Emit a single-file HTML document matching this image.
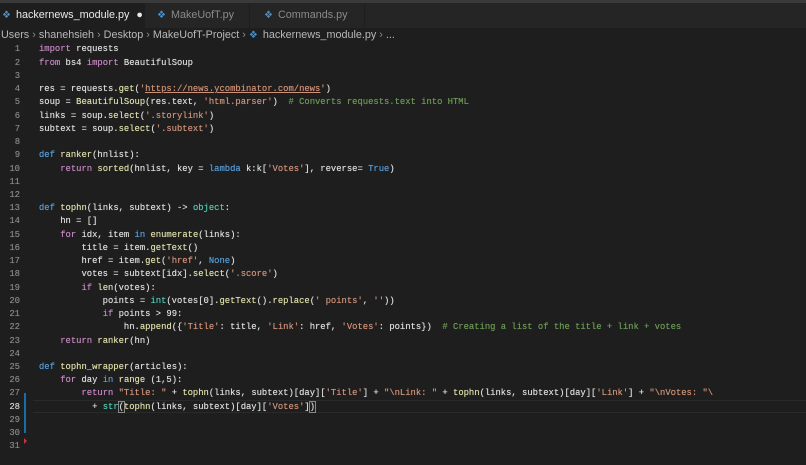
<!DOCTYPE html>
<html><head><style>
*{margin:0;padding:0;box-sizing:border-box}
body{width:806px;height:465px;background:#1e1e1e;overflow:hidden;font-family:"Liberation Sans",sans-serif;position:relative}
.top{position:absolute;left:0;top:0;width:806px;height:3px;background:#3a3a3a}
.tabs{position:absolute;left:0;top:3px;width:806px;height:25px;background:#252526}
.tab{position:absolute;top:0;height:25px;line-height:25px;font-size:10.8px;color:#8a8a8a;padding-left:12px;border-right:1px solid #1e1e1e;white-space:nowrap}
.tab.a{background:#1e1e1e;color:#eaeaea;padding-left:2px}
.py{color:#4a8fc8;font-size:10px;margin-right:5px}
.crumb{position:absolute;left:1px;top:28px;font-size:10.8px;color:#b8b8b8;line-height:15px;white-space:nowrap}
.crumb .s{color:#888;margin:0 3px}
.code{position:absolute;left:0;top:43.4px;font-family:"Liberation Mono",monospace;font-size:8.85px;line-height:13.23px;color:#dcdcdc;white-space:pre;text-shadow:0 0 0.4px currentColor}
.ln{position:absolute;left:0;top:0;width:20px;text-align:right;color:#858585}
.ln .c{color:#d0d0d0}
.tx{position:absolute;left:39px;top:0}
.k{color:#c586c0}.d{color:#569cd6}.f{color:#dcdcaa}.s1{color:#ce9178}.c1{color:#6a9955}.n{color:#569cd6}.t{color:#4ec9b0}
.hl{position:absolute;left:33px;top:400px;width:773px;height:13px;border-top:1px solid #2a2a2a;border-bottom:1px solid #2a2a2a}
.gb{position:absolute;left:24px;width:2px;background:#1b6ca8}
</style></head><body>
<div class="top"></div>
<div class="tabs">
<div class="tab a" style="left:0;width:145px"><span class="py">&#10070;</span>hackernews_module.py <span style="margin-left:4px">●</span></div>
<div class="tab" style="left:145px;width:105px;padding-left:12px"><span class="py">&#10070;</span>MakeUofT.py</div>
<div class="tab" style="left:250px;width:115px;padding-left:14px"><span class="py">&#10070;</span>Commands.py</div>
</div>
<div class="crumb">Users<span class="s">›</span>shanehsieh<span class="s">›</span>Desktop<span class="s">›</span>MakeUofT-Project<span class="s">›</span><span class="py">&#10070;</span>hackernews_module.py<span class="s">›</span>...</div>
<div class="hl"></div>
<div class="gb" style="top:393px;height:40px"></div>
<div class="code"><div class="ln">1
2
3
4
5
6
7
8
9
10
11
12
13
14
15
16
17
18
19
20
21
22
23
24
25
26
27
<span class="c">28</span>
29
30
31</div><div class="tx"><span class="k">import</span> requests
<span class="k">from</span> bs4 <span class="k">import</span> BeautifulSoup

res = requests.<span class="f">get</span>(<span class="s1">'<u>https://news.ycombinator.com/news</u>'</span>)
soup = <span class="f">BeautifulSoup</span>(res.text, <span class="s1">'html.parser'</span>)  <span class="c1"># Converts requests.text into HTML</span>
links = soup.<span class="f">select</span>(<span class="s1">'.storylink'</span>)
subtext = soup.<span class="f">select</span>(<span class="s1">'.subtext'</span>)

<span class="d">def</span> <span class="f">ranker</span>(hnlist):
    <span class="k">return</span> <span class="f">sorted</span>(hnlist, key = <span class="d">lambda</span> k:k[<span class="s1">'Votes'</span>], reverse= <span class="n">True</span>)


<span class="d">def</span> <span class="f">tophn</span>(links, subtext) -&gt; <span class="t">object</span>:
    hn = []
    <span class="k">for</span> idx, item <span class="d">in</span> <span class="f">enumerate</span>(links):
        title = item.<span class="f">getText</span>()
        href = item.<span class="f">get</span>(<span class="s1">'href'</span>, <span class="n">None</span>)
        votes = subtext[idx].<span class="f">select</span>(<span class="s1">'.score'</span>)
        <span class="k">if</span> <span class="f">len</span>(votes):
            points = <span class="t">int</span>(votes[0].<span class="f">getText</span>().<span class="f">replace</span>(<span class="s1">' points'</span>, <span class="s1">''</span>))
            <span class="k">if</span> points &gt; 99:
                hn.<span class="f">append</span>({<span class="s1">'Title'</span>: title, <span class="s1">'Link'</span>: href, <span class="s1">'Votes'</span>: points})  <span class="c1"># Creating a list of the title + link + votes</span>
    <span class="k">return</span> <span class="f">ranker</span>(hn)

<span class="d">def</span> <span class="f">tophn_wrapper</span>(articles):
    <span class="k">for</span> day <span class="d">in</span> <span class="f">range</span> (1,5):
        <span class="k">return</span> <span class="s1">"Title: "</span> + <span class="f">tophn</span>(links, subtext)[day][<span class="s1">'Title'</span>] + <span class="s1">"\nLink: "</span> + <span class="f">tophn</span>(links, subtext)[day][<span class="s1">'Link'</span>] + <span class="s1">"\nVotes: "\</span>
          + <span class="t">str</span><span style="outline:1px solid #888">(</span><span class="f">tophn</span>(links, subtext)[day][<span class="s1">'Votes'</span>]<span style="outline:1px solid #888">)</span></div></div>
<div style="position:absolute;left:24px;top:438px;width:0;height:0;border-left:3px solid #d0303a;border-top:3px solid transparent;border-bottom:3px solid transparent"></div>
</body></html>
